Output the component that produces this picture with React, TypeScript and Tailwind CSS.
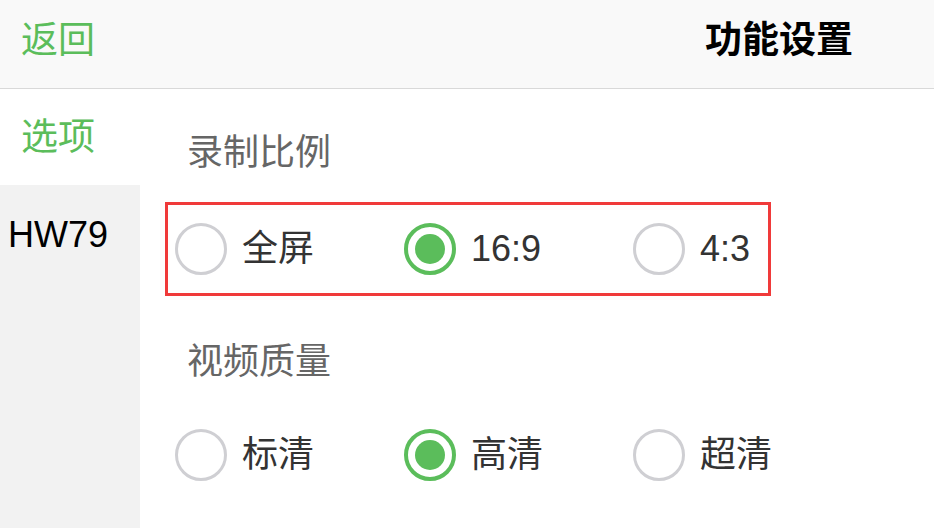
import React from 'react';

type Option = { label: string; checked?: boolean };

const ratioOptions: Option[] = [{ label: '全屏' }, { label: '16:9', checked: true }, { label: '4:3' }];
const qualityOptions: Option[] = [{ label: '标清' }, { label: '高清', checked: true }, { label: '超清' }];

const Radio: React.FC<{ checked?: boolean }> = ({ checked }) =>
  checked ? (
    <span className="flex h-[52px] w-[52px] shrink-0 items-center justify-center rounded-full border-[4px] border-[#5bbd5b] bg-white">
      <span className="h-[30px] w-[30px] rounded-full bg-[#5bbd5b]" />
    </span>
  ) : (
    <span className="h-[52px] w-[52px] shrink-0 rounded-full border-[3px] border-[#cfcfd3] bg-white" />
  );

const RadioRow: React.FC<{ options: Option[]; outlined?: boolean; className?: string }> = ({
  options,
  outlined,
  className = '',
}) => (
  <div
    className={`ml-[25px] flex h-[94px] w-[606px] items-center border-[3px] pl-[7px] ${
      outlined ? 'border-[#f03a3a]' : 'border-transparent'
    } ${className}`}
  >
    {options.map((o) => (
      <div key={o.label} className="flex w-[229px] shrink-0 items-center gap-[15px] last:w-auto">
        <Radio checked={o.checked} />
        <span className="text-[36px] leading-none text-[#333333]">{o.label}</span>
      </div>
    ))}
  </div>
);

export default function App() {
  return (
    <div
      className="flex h-[528px] w-[934px] flex-col overflow-hidden bg-white"
      style={{ fontFamily: '"Liberation Sans", "Noto Sans CJK SC", sans-serif' }}
    >
      <header className="flex h-[89px] shrink-0 items-center justify-between border-b border-[#d9d9d9] bg-[#f9f9f9] pb-[8px] pl-[21px] pr-[81px]">
        <span className="text-[37px] leading-none text-[#5bbd5b]">返回</span>
        <span className="text-[37px] font-bold leading-none text-black">功能设置</span>
      </header>

      <div className="flex flex-1">
        <aside className="w-[140px] shrink-0 bg-[#f2f2f2]">
          <div className="flex h-[96px] items-center bg-white pl-[21px] text-[37px] leading-none text-[#5bbd5b]">
            选项
          </div>
          <div className="flex h-[100px] items-center pl-[8px] text-[36px] leading-none text-black">HW79</div>
        </aside>

        <main className="flex-1 pt-[31px]">
          <div className="flex h-[66px] items-center pl-[47px] text-[36px] leading-none text-[#666666]">
            录制比例
          </div>
          <RadioRow options={ratioOptions} outlined className="mt-[16px]" />
          <div className="mt-[33px] flex h-[66px] items-center pl-[47px] text-[36px] leading-none text-[#666666]">
            视频质量
          </div>
          <RadioRow options={qualityOptions} className="mt-[13px]" />
        </main>
      </div>
    </div>
  );
}
